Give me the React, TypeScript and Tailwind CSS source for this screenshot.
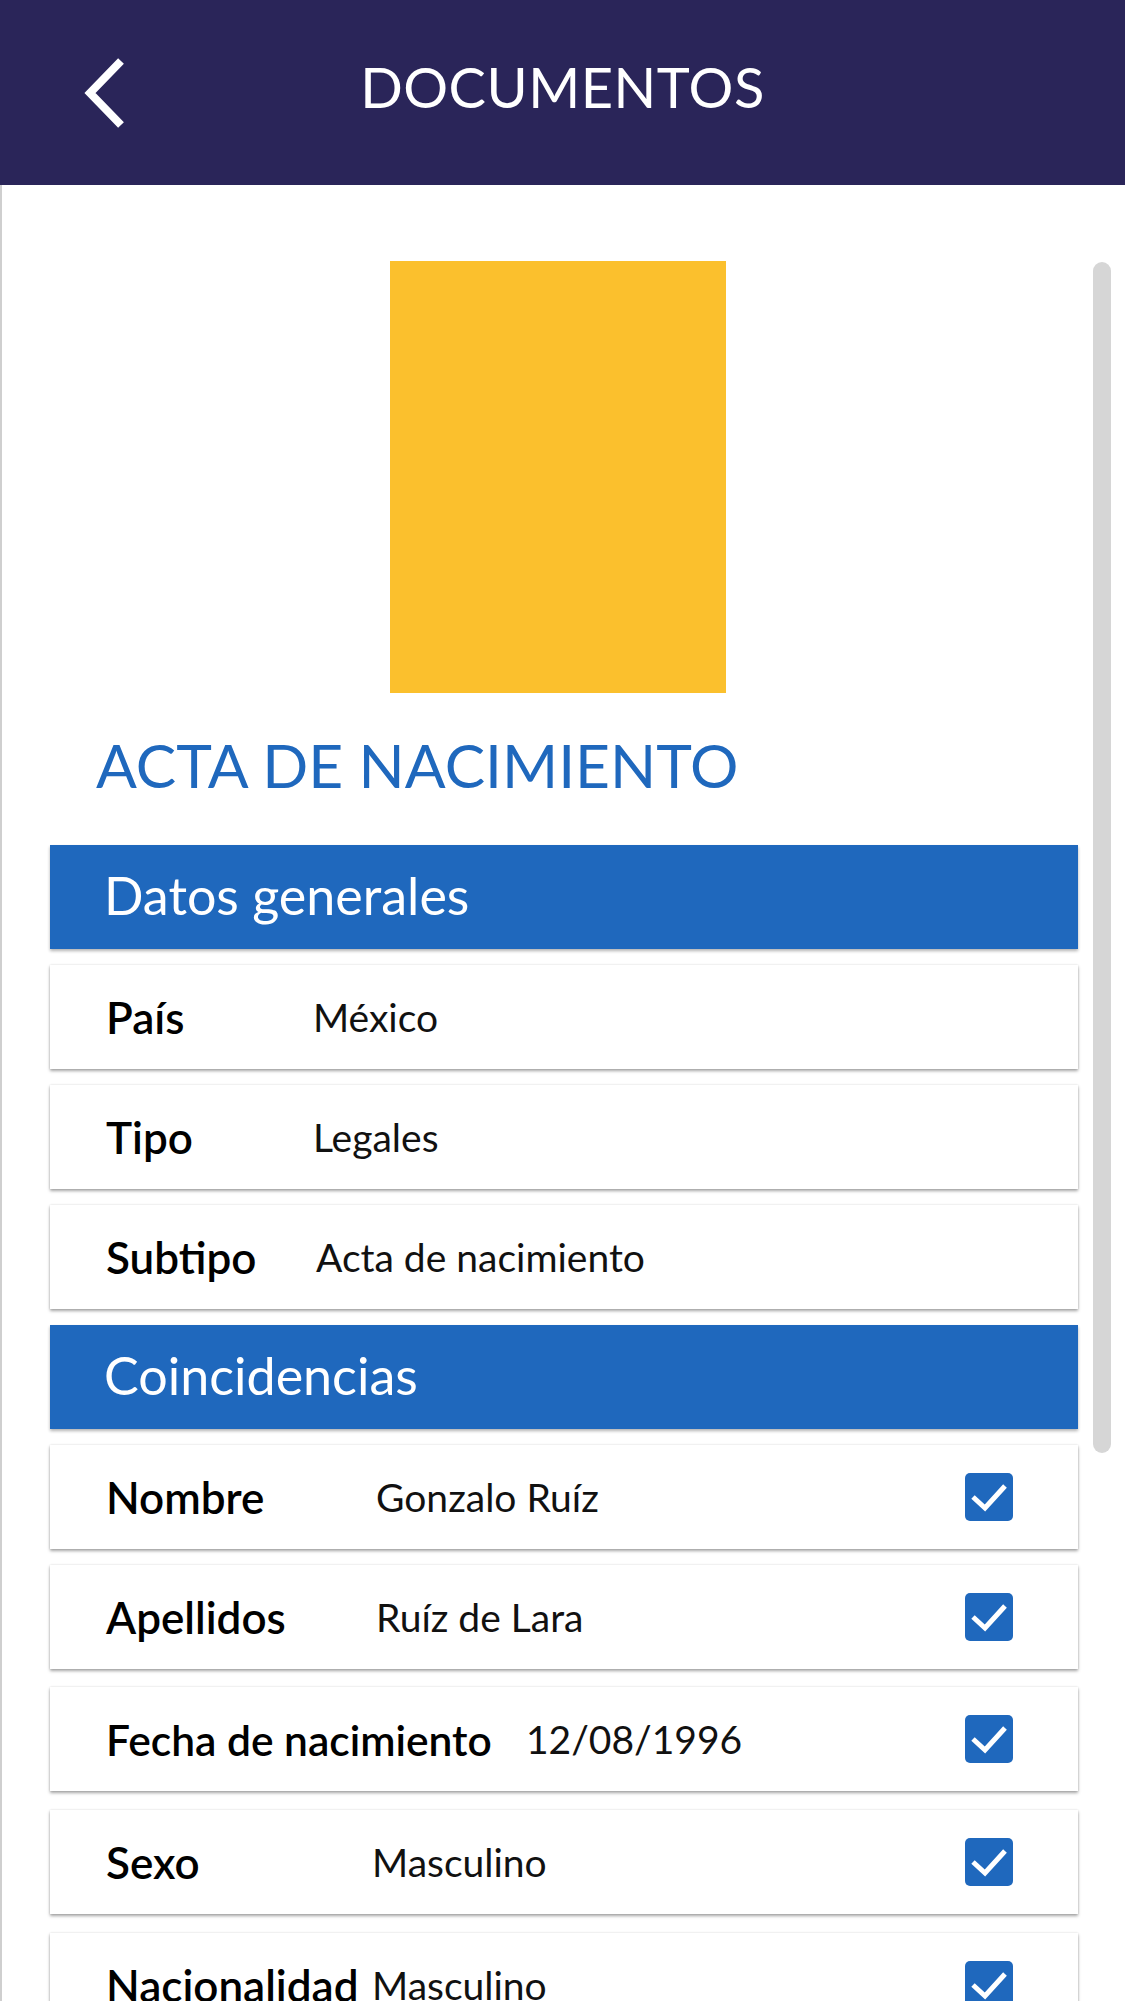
import React from "react";

const FONT = { fontFamily: "Lato, 'Liberation Sans', sans-serif" };

function Check() {
  return (
    <div className="w-[48px] h-[48px] rounded-[5px] bg-[#1f68bd] flex items-center justify-center shrink-0">
      <svg width="48" height="48" viewBox="0 0 48 48">
        <path d="M8 24 L20 35 L40 13" fill="none" stroke="white" strokeWidth="5" strokeLinecap="butt" strokeLinejoin="miter" />
      </svg>
    </div>
  );
}

type Row = { label: string; value: string; labelCls: string; mt: string; check?: boolean };

const datos: Row[] = [
  { label: "País", value: "México", labelCls: "w-[207px]", mt: "mt-4" },
  { label: "Tipo", value: "Legales", labelCls: "w-[207px]", mt: "mt-4" },
  { label: "Subtipo", value: "Acta de nacimiento", labelCls: "w-[210px]", mt: "mt-4" },
];

const coinc: Row[] = [
  { label: "Nombre", value: "Gonzalo Ruíz", labelCls: "w-[270px]", mt: "mt-4", check: true },
  { label: "Apellidos", value: "Ruíz de Lara", labelCls: "w-[270px]", mt: "mt-4", check: true },
  { label: "Fecha de nacimiento", value: "12/08/1996", labelCls: "w-[420px]", mt: "mt-[18px]", check: true },
  { label: "Sexo", value: "Masculino", labelCls: "w-[266px]", mt: "mt-[19px]", check: true },
  { label: "Nacionalidad", value: "Masculino", labelCls: "w-[266px]", mt: "mt-[19px]", check: true },
];

function Card({ r }: { r: Row }) {
  return (
    <div
      className={`${r.mt} h-[104px] shrink-0 bg-white flex items-center pl-[56px] pr-[65px] shadow-[0_2px_3px_rgba(0,0,0,0.35),0_0_2px_rgba(0,0,0,0.12)]`}
    >
      <div className={`${r.labelCls} shrink-0 text-[44px] font-semibold text-black leading-none whitespace-nowrap`}>
        <span className={r.label === "Fecha de nacimiento" ? "text-[42.5px]" : ""}>{r.label}</span>
      </div>
      <div className="flex-1 text-[39px] text-[#111] leading-none whitespace-nowrap">{r.value}</div>
      {r.check && <Check />}
    </div>
  );
}

function Bar({ title, mt }: { title: string; mt: string }) {
  return (
    <div className={`${mt} h-[104px] shrink-0 bg-[#1f68bd] flex items-center pl-[54px] pb-[4px] shadow-[0_2px_3px_rgba(0,0,0,0.3)]`}>
      <span className="text-white text-[52px] leading-none">{title}</span>
    </div>
  );
}

export default function App() {
  return (
    <div className="w-[1125px] h-[2001px] overflow-hidden bg-white flex flex-col" style={FONT}>
      <header className="h-[185px] shrink-0 bg-[#2a2559] flex items-center">
        <div className="w-[200px] h-full flex items-center pl-[84px]">
          <svg width="44" height="70" viewBox="0 0 44 70">
            <polyline points="37,3 6,35 37,67" fill="none" stroke="white" strokeWidth="8" strokeLinecap="butt" strokeLinejoin="miter" />
          </svg>
        </div>
        <h1 className="flex-1 text-center text-white text-[56px] leading-none tracking-[0.5px] pb-[12px]">DOCUMENTOS</h1>
        <div className="w-[200px]" />
      </header>

      <main className="relative flex-1 flex border-l-2 border-[#cfcfcf] bg-[linear-gradient(to_top,#9a9a9a_2px,#ffffff_2px)]">
        <div className="flex-1 flex flex-col pl-[48px] pr-[47px] pt-[76px]">
          <div className="ml-[340px] w-[336px] h-[432px] shrink-0 bg-[#fbc02d]" />
          <h2 className="mt-[42px] h-[60px] pl-[46px] text-[#1f68bd] text-[60.5px] leading-none whitespace-nowrap">ACTA DE NACIMIENTO</h2>
          <Bar title="Datos generales" mt="mt-[50px]" />
          {datos.map((r) => (
            <Card key={r.label} r={r} />
          ))}
          <Bar title="Coincidencias" mt="mt-4" />
          {coinc.map((r) => (
            <Card key={r.label} r={r} />
          ))}
        </div>
        <div className="absolute left-[1091px] top-[77px] w-[18px] h-[1191px] rounded-full bg-[#d6d6d6]" />
      </main>
    </div>
  );
}
